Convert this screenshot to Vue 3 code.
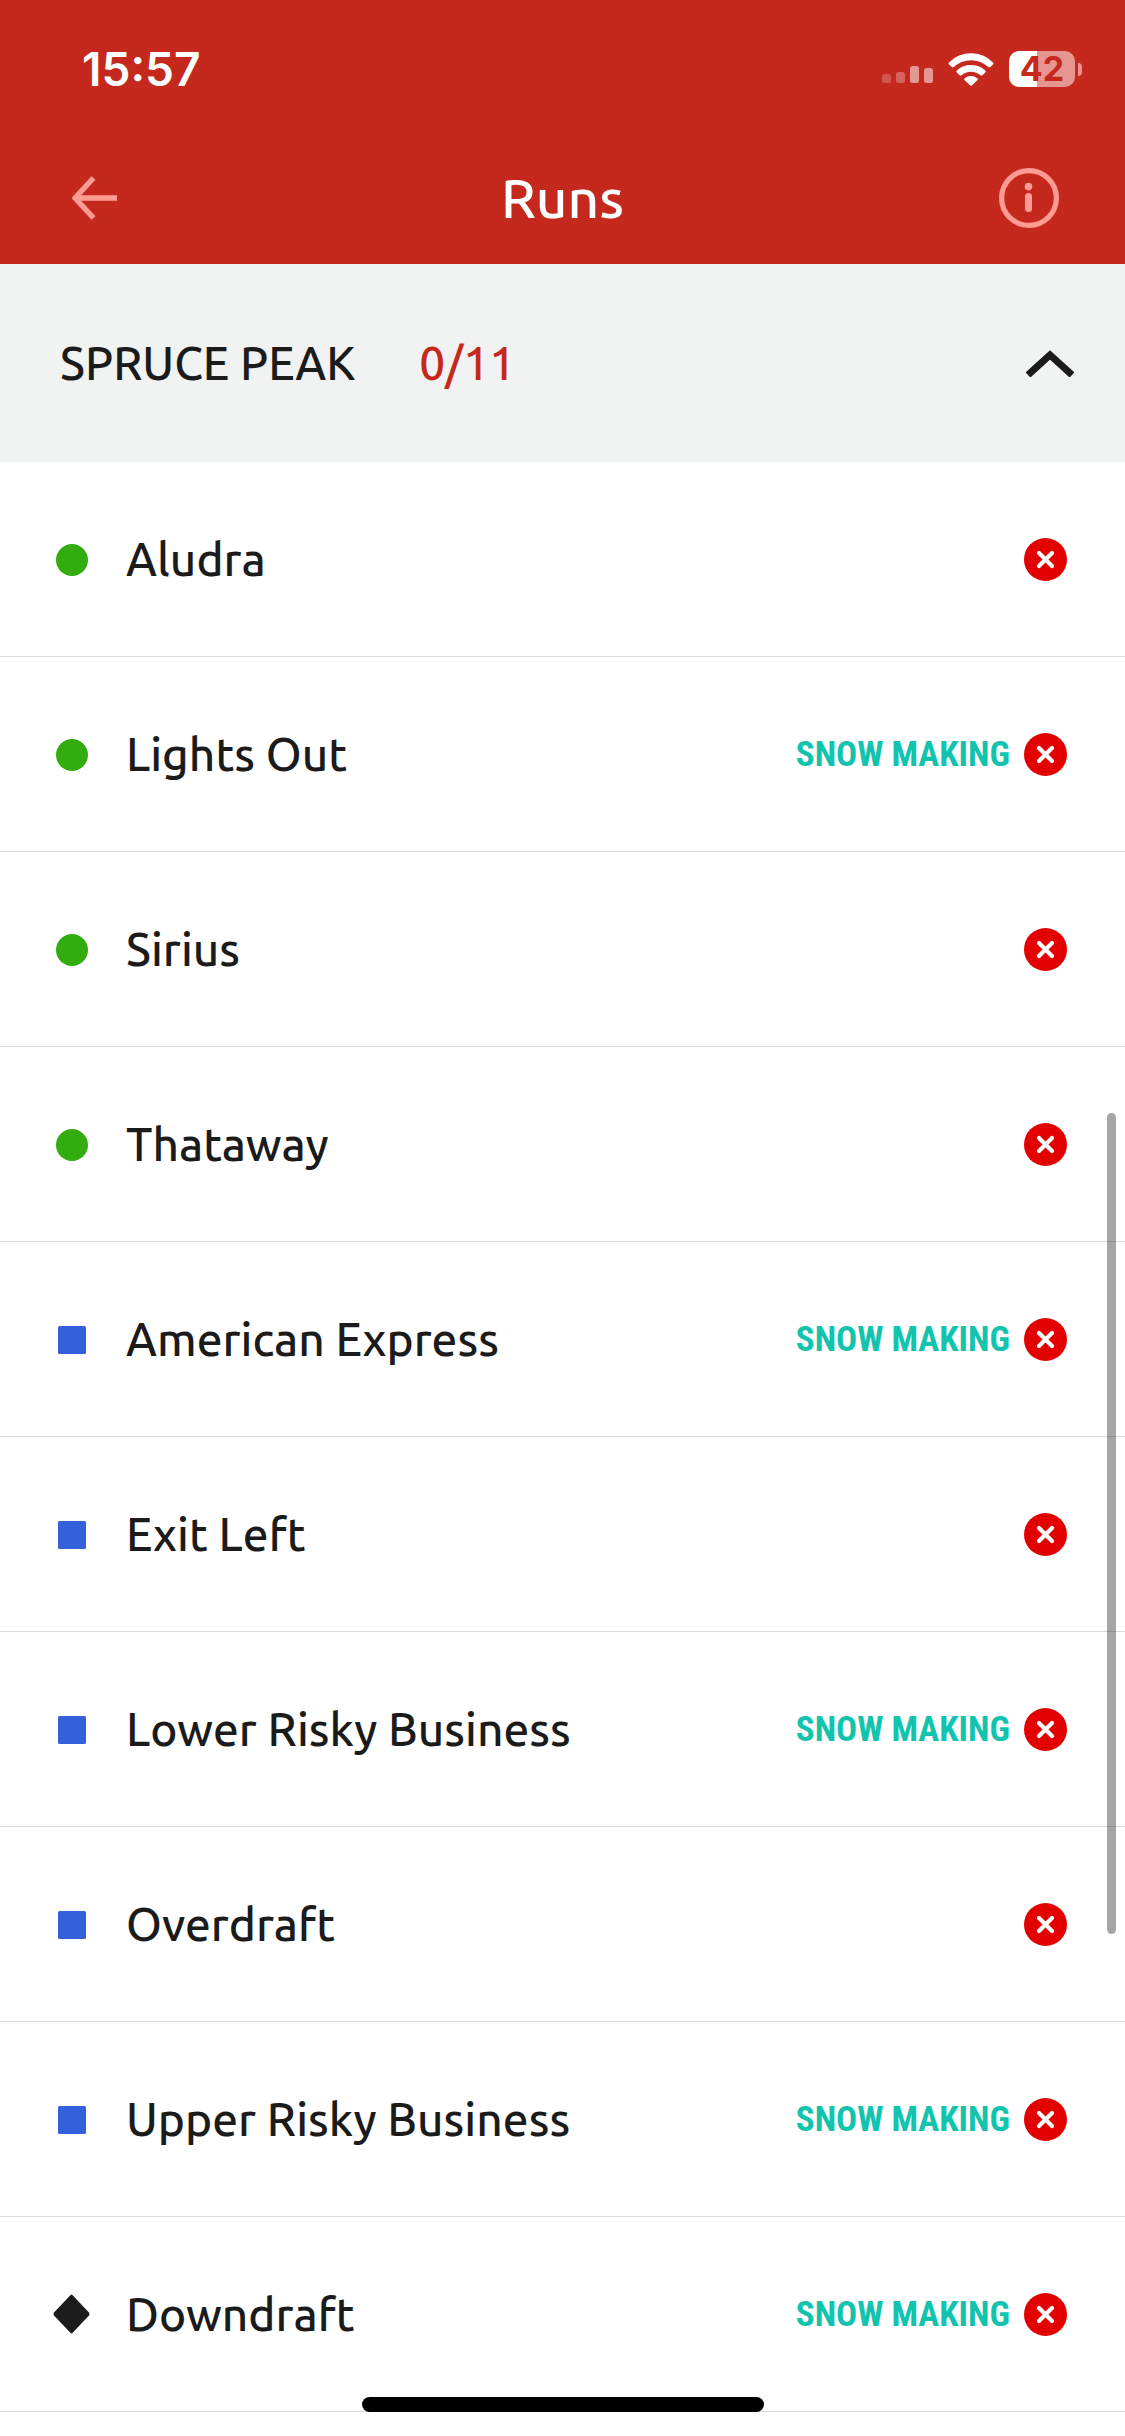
<script setup>
import { ref } from 'vue'

const expanded = ref(true)
const scroll = { offset: 457, length: 337, range: 1000 }
const percent = (value) => (value / scroll.range) * 100 + '%'

const runs = [
  { name: 'Aludra', level: 'easy', snow: false },
  { name: 'Lights Out', level: 'easy', snow: true },
  { name: 'Sirius', level: 'easy', snow: false },
  { name: 'Thataway', level: 'easy', snow: false },
  { name: 'American Express', level: 'medium', snow: true },
  { name: 'Exit Left', level: 'medium', snow: false },
  { name: 'Lower Risky Business', level: 'medium', snow: true },
  { name: 'Overdraft', level: 'medium', snow: false },
  { name: 'Upper Risky Business', level: 'medium', snow: true },
  { name: 'Downdraft', level: 'hard', snow: true },
]
</script>

<template>
  <div class="screen">
    <header class="header">
      <div class="status">
        <span class="time">15:57</span>
        <div class="indicators">
          <svg class="signal" width="51" height="18" viewBox="0 0 51 18" fill="#fff" aria-hidden="true">
            <rect x="0" y="9" width="9" height="9" rx="2.5" opacity=".22" />
            <rect x="14" y="7" width="9" height="11" rx="2.5" opacity=".28" />
            <rect x="28" y="1" width="9" height="17" rx="2.5" opacity=".52" />
            <rect x="42" y="3" width="9" height="15" rx="2.5" opacity=".52" />
          </svg>
          <svg class="wifi" width="46" height="34" viewBox="0 0 46 34" fill="#fff" aria-hidden="true">
            <path d="M1 10.4a31 31 0 0 1 44 0q1 1-.1 2.1l-2.6 2.6q-1 .9-2 0a25 25 0 0 0-34.600 0q-1 .9-2 0l-2.600-2.600q-1.100-1.100-.1-2.100z" />
            <path d="M8.800 18.600a20.500 20.500 0 0 1 28.400 0q1 1 0 2l-2.800 2.700q-1 .9-2 0a14 14 0 0 0-18.800 0q-1 .9-2 0l-2.800-2.700q-1-1 0-2z" />
            <path d="M16.700 26.200a10 10 0 0 1 12.600 0q1.100 1 0 2.100l-5.300 5q-1 .9-2 0l-5.300-5q-1.100-1.100 0-2.100z" />
          </svg>
          <div class="battery">
            <span class="battery-level">42</span>
            <span class="battery-cap"></span>
          </div>
        </div>
      </div>
      <nav class="nav">
        <button class="icon-button start" type="button" aria-label="Back">
          <svg width="46" height="44" viewBox="0 0 46 44" fill="none" stroke="#fe9c94" stroke-width="5.500" stroke-linejoin="round">
            <path d="M45 22H4M21.500 2 3 22l18.500 20" />
          </svg>
        </button>
        <h1 class="title">Runs</h1>
        <button class="icon-button end" type="button" aria-label="Information">
          <svg width="60" height="60" viewBox="0 0 60 60">
            <circle cx="30" cy="30" r="27.400" fill="none" stroke="#fe9c94" stroke-width="5.200" />
            <circle cx="29.500" cy="18.600" r="3.800" fill="#fe9c94" />
            <rect x="26" y="25" width="7" height="19" rx="3.500" fill="#fe9c94" />
          </svg>
        </button>
      </nav>
    </header>

    <main>
      <button class="section" type="button" :aria-expanded="expanded" @click="expanded = !expanded">
        <span>SPRUCE PEAK</span>
        <span class="count">0/11</span>
        <svg class="chevron" :class="{ closed: !expanded }" width="48" height="28" viewBox="0 0 48 28" fill="none" stroke="#1b1b1b" stroke-width="7" aria-hidden="true">
          <path d="M2 26 24 6l22 20" />
        </svg>
      </button>

      <ul v-if="expanded" class="runs">
        <li v-for="run in runs" :key="run.name" class="run">
          <svg class="level" width="38" height="40" viewBox="0 0 38 40" aria-hidden="true">
            <circle v-if="run.level === 'easy'" cx="19" cy="21" r="16" fill="#33ac0f" />
            <rect v-else-if="run.level === 'medium'" x="5" y="7" width="28" height="28" rx="1.500" fill="#3460db" />
            <path v-else d="M17.600 1 1 18.500q-1 1.500 0 3L17.600 39q.9.800 1.800 0L36 21.500q1-1.500 0-3L19.400 1q-.9-.8-1.800 0z" fill="#1b1b1b" />
          </svg>
          <span class="name">{{ run.name }}</span>
          <span v-if="run.snow" class="snow">SNOW MAKING</span>
          <svg class="closed-mark" width="43" height="43" viewBox="0 0 43 43" role="img" aria-label="Closed">
            <circle cx="21.500" cy="21.500" r="21.500" fill="#e30000" />
            <path d="m15 15 13 13m0-13L15 28" stroke="#fff" stroke-width="4.200" stroke-linecap="round" />
          </svg>
        </li>
      </ul>
    </main>

    <div class="scrollbar" :style="{ top: percent(scroll.offset), height: percent(scroll.length) }"></div>
    <div class="home-indicator"></div>
  </div>
</template>

<style>
body {
  margin: 0;
  background: #fff;
}
</style>

<style scoped>
.screen {
  position: relative;
  min-height: 100vh;
  color: #1b1b1b;
  background: #fff;
  font-family: Ubuntu, "Noto Sans", sans-serif;
  font-weight: 500;
}

button {
  margin: 0;
  padding: 0;
  border: 0;
  background: none;
  color: inherit;
  font: inherit;
}

.header {
  background: #c5281c;
  color: #fff;
}

.status {
  display: flex;
  align-items: center;
  justify-content: space-between;
  height: 132px;
  padding: 6px 43px 0 82px;
  box-sizing: border-box;
}

.time {
  font: 600 46px/46px Inter, sans-serif;
}

.indicators {
  display: flex;
  align-items: center;
  gap: 15px;
}

.signal {
  align-self: flex-end;
  margin-bottom: 4px;
}

.battery {
  position: relative;
  width: 66px;
  height: 36px;
  margin-right: 7px;
  border-radius: 10px;
  background: linear-gradient(90deg, #fff 42%, #e79590 42%);
}

.battery-level {
  display: block;
  color: #c5281c;
  font: 700 34px/36px Inter, sans-serif;
  text-align: center;
}

.battery-cap {
  position: absolute;
  top: 12px;
  right: -7px;
  width: 4px;
  height: 13px;
  border-radius: 0 6px 6px 0;
  background: #e79590;
}

.nav {
  display: grid;
  grid-template-columns: 1fr auto 1fr;
  align-items: center;
  height: 132px;
  padding: 0 66px;
}

.icon-button {
  display: flex;
}

.icon-button.start {
  justify-self: start;
  padding: 6px;
}

.icon-button.end {
  justify-self: end;
}

.title {
  margin: 0;
  font-size: 55px;
  font-weight: 500;
  line-height: 60px;
}

.section {
  display: flex;
  align-items: center;
  gap: 64px;
  width: 100%;
  height: 198px;
  padding: 0 51px 0 60px;
  background: #f1f3f2;
  font-size: 46px;
  line-height: 60px;
}

.count {
  color: #c5281c;
}

.chevron {
  margin-left: auto;
}

.chevron.closed {
  transform: rotate(180deg);
}

.runs {
  margin: 0;
  padding: 0;
  list-style: none;
}

.run {
  display: flex;
  align-items: center;
  height: 194px;
  padding: 0 58px 0 53px;
  border-bottom: 1px solid #d9dbda;
}

.name {
  flex: 1;
  margin-left: 35px;
  font-size: 46px;
  line-height: 60px;
}

.snow {
  margin-right: 14px;
  padding-top: 2px;
  color: #12c4ae;
  font: 700 35px/40px "Roboto Condensed", Roboto, sans-serif;
}

.scrollbar {
  position: fixed;
  right: 9px;
  width: 9px;
  border-radius: 5px;
  background: rgba(0, 0, 0, 0.35);
}

.home-indicator {
  position: fixed;
  bottom: 24px;
  left: 50%;
  width: 402px;
  height: 15px;
  border-radius: 8px;
  background: #000;
  transform: translateX(-50%);
}
</style>
